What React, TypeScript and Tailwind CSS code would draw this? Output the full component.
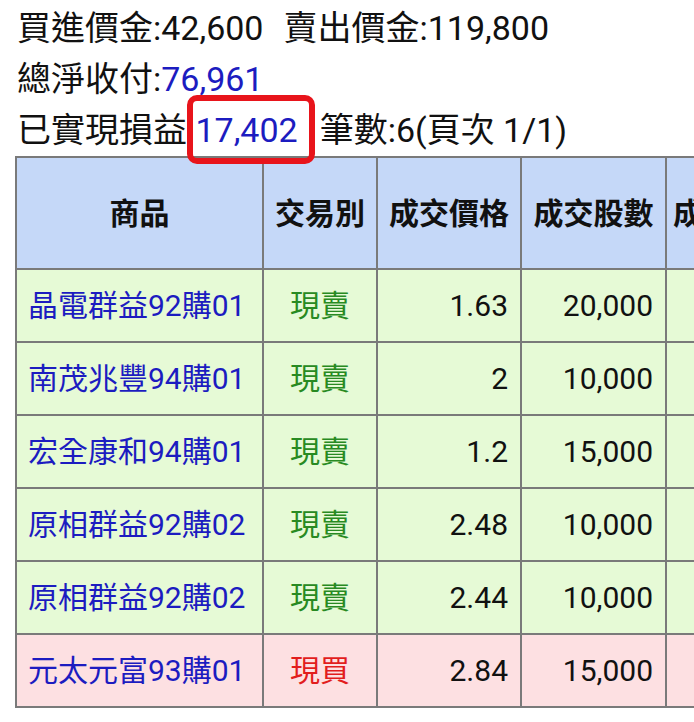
import React from 'react'

type Row = {
  name: string
  kind: '現賣' | '現買'
  price: string
  qty: string
}

const rows: Row[] = [
  { name: '晶電群益92購01', kind: '現賣', price: '1.63', qty: '20,000' },
  { name: '南茂兆豐94購01', kind: '現賣', price: '2', qty: '10,000' },
  { name: '宏全康和94購01', kind: '現賣', price: '1.2', qty: '15,000' },
  { name: '原相群益92購02', kind: '現賣', price: '2.48', qty: '10,000' },
  { name: '原相群益92購02', kind: '現賣', price: '2.44', qty: '10,000' },
  { name: '元太元富93購01', kind: '現買', price: '2.84', qty: '15,000' },
]

const font = { fontFamily: 'Roboto, "Noto Sans CJK TC", sans-serif' }

export default function App() {
  return (
    <div className="w-[694px] h-[722px] overflow-hidden bg-white text-[#111]" style={font}>
      <div className="pl-[17px] pt-[3px] text-[34px] leading-[51px]">
        <div>
          買進價金:42,600<span className="ml-[20px]">賣出價金:119,800</span>
        </div>
        <div>
          總淨收付:<span className="text-[#1c1cc0]">76,961</span>
        </div>
        <div className="relative z-10">
          已實現損益{' '}
          <span className="relative text-[#1c1cc0]">
            17,402
            <span className="absolute left-[-8px] right-[-17px] top-[-15px] bottom-[-14px] border-[6px] border-[#e8141b] rounded-[10px]" />
          </span>
          <span className="ml-[22px]">筆數:6(頁次 1/1)</span>
        </div>
      </div>

      <table className="ml-[15px] table-fixed border-collapse border-2 border-[#7a7a7a] w-[891px]">
        <colgroup>
          <col className="w-[247px]" />
          <col className="w-[114px]" />
          <col className="w-[144px]" />
          <col className="w-[145px]" />
          <col className="w-[241px]" />
        </colgroup>
        <thead>
          <tr className="h-[112px] bg-[#c5d8f8] text-[30px] font-bold">
            <th className="border-2 border-[#7a7a7a] text-center">商品</th>
            <th className="border-2 border-[#7a7a7a] text-center">交易別</th>
            <th className="border-2 border-[#7a7a7a] text-center">成交價格</th>
            <th className="border-2 border-[#7a7a7a] text-center">成交股數</th>
            <th className="border-2 border-[#7a7a7a] text-left pl-[6px]">成交金額</th>
          </tr>
        </thead>
        <tbody className="text-[30px]">
          {rows.map((r, i) => {
            const sell = r.kind === '現賣'
            return (
              <tr key={i} className={`h-[73px] ${sell ? 'bg-[#e6fad6]' : 'bg-[#fde0e2]'}`}>
                <td className="border-2 border-[#7a7a7a] pl-[11px] text-[#1c1cc0] whitespace-nowrap">{r.name}</td>
                <td className={`border-2 border-[#7a7a7a] text-center ${sell ? 'text-[#288a22]' : 'text-[#e21d1d]'}`}>
                  {r.kind}
                </td>
                <td className="border-2 border-[#7a7a7a] text-right pr-[12px]">{r.price}</td>
                <td className="border-2 border-[#7a7a7a] text-right pr-[12px]">{r.qty}</td>
                <td className="border-2 border-[#7a7a7a]"></td>
              </tr>
            )
          })}
        </tbody>
      </table>
    </div>
  )
}
